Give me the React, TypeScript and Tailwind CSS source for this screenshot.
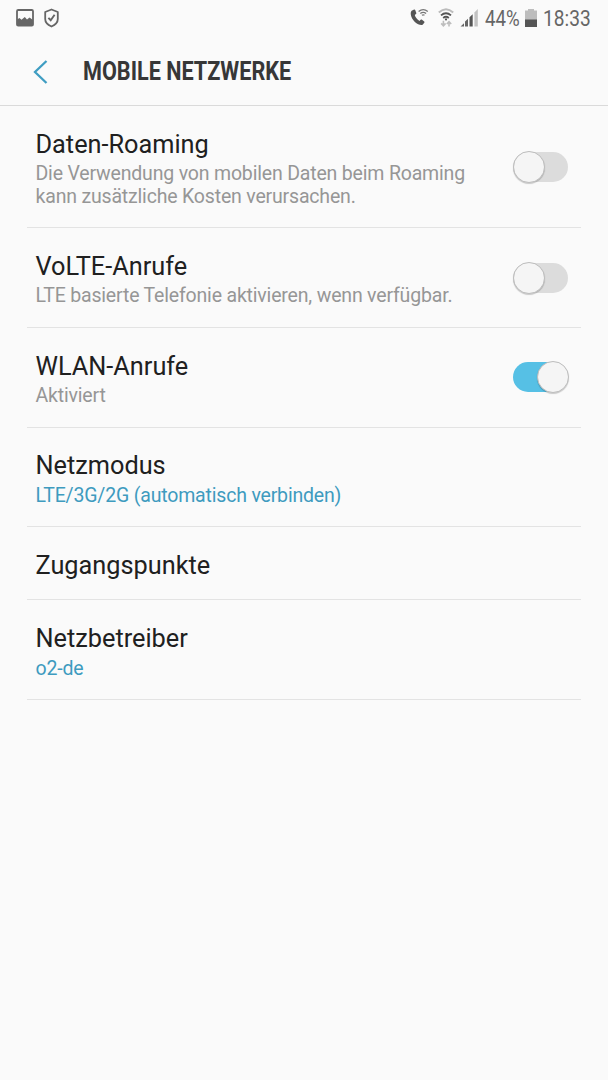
import { ReactNode, useState } from "react"
import clsx from "clsx"

function StatusBar() {
    return (
        <div className="flex h-9 items-center justify-between pl-[15.5px] pr-[17px] text-[#666]">
            <div className="flex items-center gap-[10px]">
                <svg className="-mt-px" width="18" height="18" viewBox="0 0 18 18">
                    <rect x="1" y="1" width="16" height="15.6" rx="1.2" fill="none" stroke="currentColor" strokeWidth="1.8" />
                    <path d="M1 10.5L3.5 9L5.5 10.8L8.8 8L11 10.5L13.5 8.5L17 11V16.4H1Z" fill="currentColor" />
                </svg>
                <svg className="-mt-px" width="15" height="20" viewBox="0 0 15 19" fill="none" stroke="currentColor">
                    <path d="M7.5 1L13.8 3.5V10.5C13.8 14 11 16.5 7.5 18C4 16.5 1.2 14 1.2 10.5V3.5Z" strokeWidth="1.8" strokeLinejoin="round" />
                    <path d="M4.4 9.3L6.7 11.7L10.6 6.2" strokeWidth="1.9" />
                </svg>
            </div>
            <div className="flex items-center">
                <svg width="75" height="20" viewBox="0 0 75 20" fill="none">
                    {/* wifi calling */}
                    <path d="M1.6 2.8L4.1 1.5C4.6 1.3 5 1.5 5.2 2L6.3 5.1C6.5 5.7 6.2 6.1 4.8 7.1C5.3 9.4 7.2 11.8 9.6 12.9C10.6 11.7 11.2 11.3 11.7 11.6L14.2 13.5C14.6 13.9 14.6 14.3 14.3 14.7L12.6 16.8C9 18.1 1.5 12.9 0.8 6.5C0.6 5 0.9 3.6 1.6 2.8Z" fill="#555" />
                    <path d="M8.6 3.4Q13.2-.2 17.8 3.4M10.3 5.5Q13.2 3.2 16.1 5.5M11.9 7.3Q13.2 6.3 14.5 7.3" stroke="#777" strokeWidth="1.3" />
                    {/* wifi */}
                    <path d="M28.8 4.6Q36 -2 43.2 4.6" stroke="#bcbcbc" strokeWidth="2" />
                    <path d="M31 7.4Q36 3 41 7.4M33.2 10Q36 7.6 38.8 10" stroke="#555" strokeWidth="1.8" />
                    <circle cx="36" cy="11.4" r="1.1" fill="#555" />
                    <path d="M33.4 12.8V17.6M31.2 15.4L33.4 17.8L35.6 15.4M39 18.4V13.8M36.8 16L39 13.6L41.2 16" stroke="#bdbdbd" strokeWidth="1.6" />
                    {/* signal */}
                    <path d="M50.5 18.4L54 15.2V18.4ZM55 13.4L58 10.8V18.4H55Z" fill="#666" />
                    <path d="M59.5 9.2L62.7 6.2V18.4H59.5Z" fill="#555" />
                    <path d="M64.4 4.4L67.8 1.1V18.4H64.4Z" fill="#c2c2c2" />
                </svg>
                <span className="mt-0.5 w-[36px] origin-left scale-x-[0.85] whitespace-nowrap text-[22px] leading-none">44%</span>
                <svg className="ml-1" width="12" height="18" viewBox="0 0 12 18">
                    <path d="M3 0H9V1.5H12V11H0V1.5H3Z" fill="#bdbdbd" />
                    <path d="M0 10.5H12V18H0Z" fill="#555" />
                </svg>
                <span className="ml-[6px] mt-0.5 w-[48px] origin-left scale-x-[0.87] whitespace-nowrap text-[22px] leading-none">18:33</span>
            </div>
        </div>
    )
}

function Toggle({ defaultOn = false }: { defaultOn?: boolean }) {
    const [on, setOn] = useState(defaultOn)

    return (
        <button
            role="switch"
            aria-checked={on}
            onClick={() => setOn(!on)}
            className="flex w-14 shrink-0 items-center"
        >
            <span className={clsx("-mr-[55px] h-[30px] w-[55px] shrink-0 rounded-full", on ? "bg-[#56c0e5]" : "bg-[#dcdcdc]")} />
            <span className={clsx("relative size-8 shrink-0 rounded-full border border-[#bdbdbd] bg-[#f5f5f5] shadow-[0_1px_1px_rgba(0,0,0,0.2)]", on && "ml-6")} />
        </button>
    )
}

interface RowProps {
    title: string
    children?: ReactNode
    value?: boolean
    toggle?: ReactNode
}

function Row({ title, children, value, toggle }: RowProps) {
    return (
        <li className="flex items-center justify-between border-b border-[#e3e3e3] pl-[8.5px] pr-3">
            <div className="pt-[24.8px] pb-[19.4px]">
                <h2 className="text-[25.3px] leading-7 text-[#202020]">{title}</h2>
                {children && (
                    <p className={clsx("mt-[4.3px] text-[19.5px] leading-[22.2px] tracking-[-0.18px] whitespace-nowrap", value ? "text-[#3e9bbf]" : "text-[#969696]")}>
                        {children}
                    </p>
                )}
            </div>
            {toggle}
        </li>
    )
}

function App() {
    return (
        <div className="min-h-screen bg-[#fafafa] font-['Roboto',sans-serif]">
            <StatusBar />
            <header className="flex h-[70px] items-center border-b border-[#dadada] pl-[33px] pt-[3px]">
                <svg width="15" height="24" viewBox="0 0 15 24" fill="none" stroke="#3f9dc2" strokeWidth="2.3">
                    <path d="M13.5 1L2 12L13.5 23" />
                </svg>
                <h1 className="ml-[35px] origin-left scale-x-[0.865] whitespace-nowrap text-[25px] font-bold text-[#373737]">MOBILE NETZWERKE</h1>
            </header>

            <ul className="mx-[27px] pt-[0.3px]">
                <Row title="Daten-Roaming" toggle={<Toggle />}>
                    Die Verwendung von mobilen Daten beim Roaming
                    <br />
                    kann zusätzliche Kosten verursachen.
                </Row>
                <Row title="VoLTE-Anrufe" toggle={<Toggle />}>
                    LTE basierte Telefonie aktivieren, wenn verfügbar.
                </Row>
                <Row title="WLAN-Anrufe" toggle={<Toggle defaultOn />}>
                    Aktiviert
                </Row>
                <Row title="Netzmodus" value>
                    LTE/3G/2G (automatisch verbinden)
                </Row>
                <Row title="Zugangspunkte" />
                <Row title="Netzbetreiber" value>
                    o2-de
                </Row>
            </ul>
        </div>
    )
}

export default App
